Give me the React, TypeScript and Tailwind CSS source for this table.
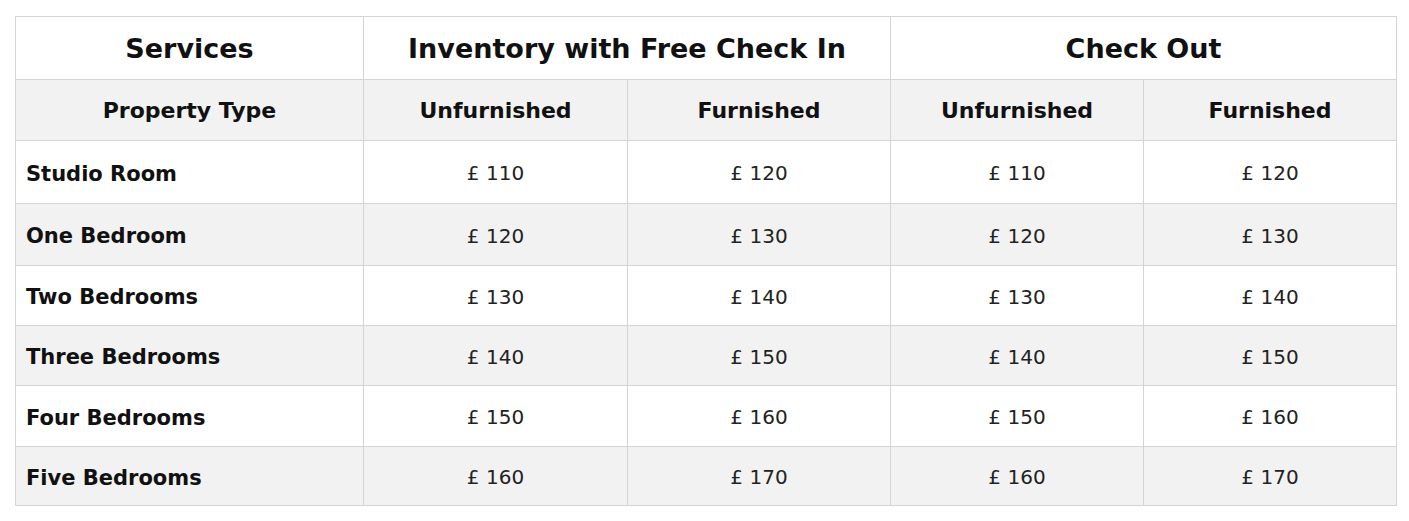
const rows = [
  { label: "Studio Room", prices: ["110", "120", "110", "120"], h: "h-[63px]" },
  { label: "One Bedroom", prices: ["120", "130", "120", "130"], h: "h-[62px]" },
  { label: "Two Bedrooms", prices: ["130", "140", "130", "140"], h: "h-[60px]" },
  { label: "Three Bedrooms", prices: ["140", "150", "140", "150"], h: "h-[60px]" },
  { label: "Four Bedrooms", prices: ["150", "160", "150", "160"], h: "h-[61px]" },
  { label: "Five Bedrooms", prices: ["160", "170", "160", "170"], h: "h-[59px]" },
];

const cell = "border border-[#d4d4d4]";

const App = () => {
  return (
    <div className="w-[1409px] h-[521px] bg-white pt-[16px] pl-[15px] font-['DejaVu_Sans',sans-serif] text-[#111]">
      <table className="border-collapse table-fixed w-[1381px]">
        <colgroup>
          <col className="w-[348px]" />
          <col className="w-[264px]" />
          <col className="w-[263px]" />
          <col className="w-[253px]" />
          <col className="w-[253px]" />
        </colgroup>
        <thead>
          {/** Top header */}
          <tr className="h-[63px] bg-white">
            <th className={`${cell} pt-[2px] text-[27px] font-bold`}>Services</th>
            <th colSpan={2} className={`${cell} pt-[2px] text-[27px] font-bold`}>
              Inventory with Free Check In
            </th>
            <th colSpan={2} className={`${cell} pt-[2px] text-[27px] font-bold`}>
              Check Out
            </th>
          </tr>
          {/** Sub header */}
          <tr className="h-[61px] bg-[#f2f2f2]">
            <th className={`${cell} text-[22px] font-bold`}>Property Type</th>
            <th className={`${cell} text-[22px] font-bold`}>Unfurnished</th>
            <th className={`${cell} text-[22px] font-bold`}>Furnished</th>
            <th className={`${cell} text-[22px] font-bold`}>Unfurnished</th>
            <th className={`${cell} text-[22px] font-bold`}>Furnished</th>
          </tr>
        </thead>
        <tbody>
          {rows.map((row, i) => (
            <tr key={row.label} className={`${row.h} ${i % 2 === 1 ? "bg-[#f2f2f2]" : "bg-white"}`}>
              <td className={`${cell} pl-[10px] pt-[5px] text-[21px] font-bold`}>{row.label}</td>
              {row.prices.map((p, j) => (
                <td key={j} className={`${cell} pt-[2px] text-center text-[20px] text-[#222]`}>
                  £ {p}
                </td>
              ))}
            </tr>
          ))}
        </tbody>
      </table>
    </div>
  );
};

export default App;
